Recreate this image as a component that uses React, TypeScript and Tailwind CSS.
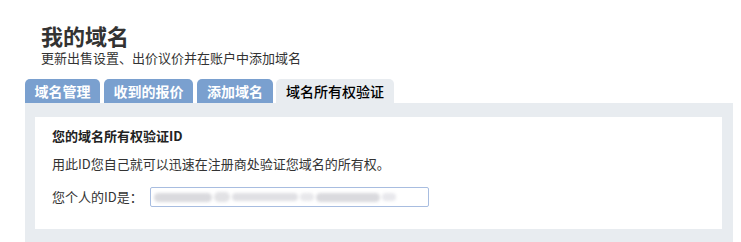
const font = "font-['Microsoft_YaHei','Noto_Sans_CJK_SC',sans-serif]";

const tabs = [
  { label: "域名管理", w: "w-[75px] mr-[4px]" },
  { label: "收到的报价", w: "w-[89px] mr-[4px]" },
  { label: "添加域名", w: "w-[76px] mr-[3px]" },
];

export default function App() {
  return (
    <div className={`w-[741px] h-[242px] bg-white overflow-hidden ${font}`}>
      {/* Header */}
      <div className="pl-[41px] pt-[21px]">
        <h1 className="text-[22px] leading-[29px] font-bold text-[#333]">我的域名</h1>
        <p className="text-[13px] leading-[16px] text-[#333]">更新出售设置、出价议价并在账户中添加域名</p>
      </div>

      {/* Tabs */}
      <div className="flex items-end pl-[25px] mt-[13px] h-[24px]">
        {tabs.map((t) => (
          <div
            key={t.label}
            className={`${t.w} h-[24px] text-center rounded-t-[5px] bg-[#7aa0cf] text-white font-bold text-[14px] leading-[24px]`}
          >
            {t.label}
          </div>
        ))}
        <div className="w-[118px] h-[24px] text-center rounded-t-[5px] bg-[#e8ecf0] text-black text-[14px] leading-[24px] font-medium">
          域名所有权验证
        </div>
      </div>

      {/* Panel */}
      <div className="ml-[25px] w-[708px] bg-[#e8ecf0] pl-[10px] pr-[11px] pt-[14px] pb-[13px]">
        <div className="bg-white pl-[17px] pt-[11px] pb-[22px]">
          <h2 className="text-[13px] leading-[16px] font-bold text-[#222]">您的域名所有权验证ID</h2>
          <p className="mt-[12px] text-[13px] leading-[16px] text-[#333]">
            用此ID您自己就可以迅速在注册商处验证您域名的所有权。
          </p>
          <div className="mt-[15px] flex items-center">
            <span className="w-[98px] text-[13px] leading-[20px] text-[#333]">您个人的ID是：</span>
            <div className="w-[279px] h-[20px] border border-[#a8bde0] rounded-[2px] flex items-center pl-[3px]">
              <div className="flex items-center gap-[2px] blur-[1.5px]">
                <div className="w-[58px] h-[9px] rounded-full bg-[#dadade]" />
                <div className="w-[16px] h-[10px] rounded-full bg-[#e2e2e5]" />
                <div className="w-[66px] h-[8px] rounded-full bg-[#e0e0e4]" />
                <div className="w-[14px] h-[8px] rounded-full bg-[#e8e8eb]" />
                <div className="w-[64px] h-[9px] rounded-full bg-[#dadade]" />
                <div className="w-[14px] h-[8px] rounded-full bg-[#e8e8ec]" />
              </div>
            </div>
          </div>
        </div>
      </div>
    </div>
  );
}
